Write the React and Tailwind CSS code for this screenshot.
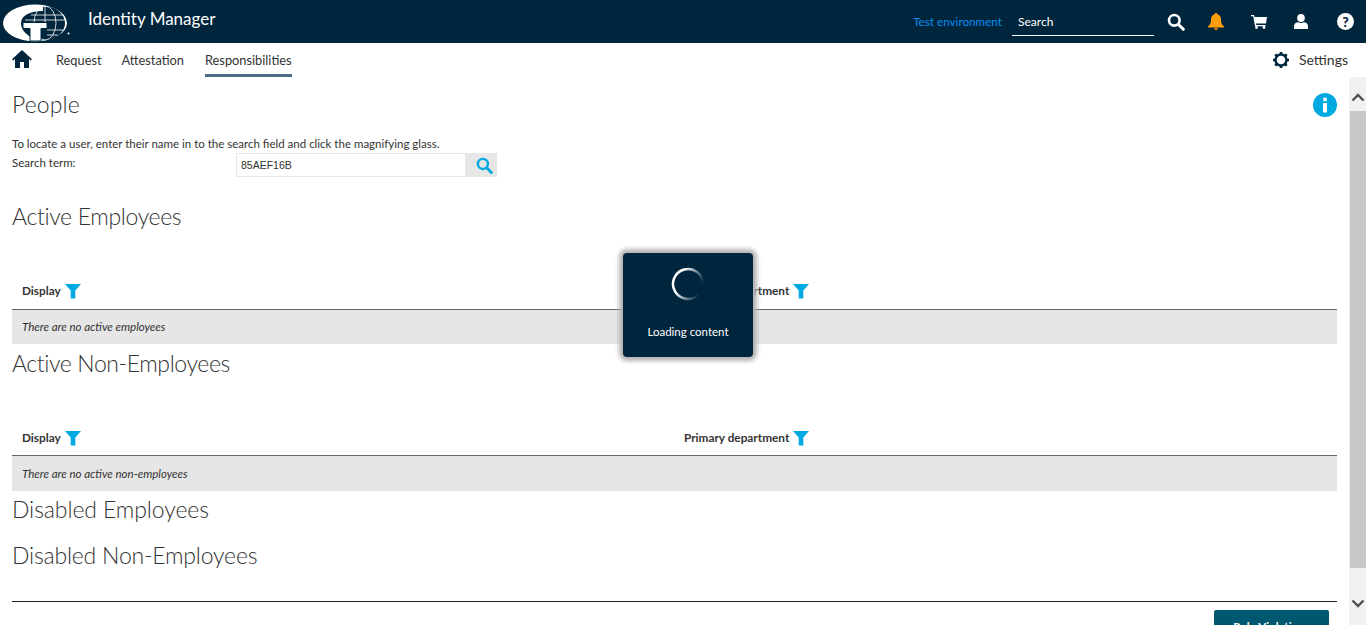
import React from "react";

const Funnel = () => (
  <svg width="16" height="16" viewBox="0 0 16 16" className="ml-[4px] shrink-0">
    <path d="M0 1h16L10.300 7.500V15.500H5.700V7.500Z" fill="#00a9e0" />
  </svg>
);

const Logo = () => (
  <svg width="70" height="43" viewBox="0 0 70 43" className="shrink-0">
    <ellipse cx="34" cy="23" rx="32" ry="18.500" fill="#fff" />
    <path d="M42 11C30 11 20 15 20 23c0 6 4 10 8 13 4 3 10 4 16 4 11 0 20-8 20-17 0-9-9-16.500-20-16.500h-2Z" fill="#00263e" />
    <g fill="none" stroke="#fff" strokeWidth="0.800">
      <ellipse cx="44" cy="23" rx="11" ry="17" />
      <path d="M44 6v17M30 15h32M24 20h40M46 30h16M46 35h11" />
    </g>
    <path d="M22 22.500h24v6H40V41H29V28.500h-7Z" fill="#fff" stroke="#00263e" strokeWidth="1" />
    <circle cx="67.500" cy="33.500" r="1" fill="#fff" />
  </svg>
);

const Heading = ({ className = "", children }) => (
  <h2 className={`text-[23px] leading-[30px] font-light text-[#333333] ${className}`}>{children}</h2>
);

const EmptyTable = ({ message, rowClass, headClass }) => (
  <div>
    <div className={`grid grid-cols-[662px_1fr] items-center border-b border-[#666666] pl-[10px] pb-[1px] ${headClass}`}>
      <div className="flex items-center text-[11.800px] font-bold text-[#333333]">Display<Funnel /></div>
      <div className="flex items-center text-[11.800px] font-bold text-[#333333]">Primary department<Funnel /></div>
    </div>
    <div className={`bg-[#e6e6e6] px-[10px] flex items-center text-[11.500px] italic text-[#333333] ${rowClass}`}>{message}</div>
  </div>
);

export default function App() {
  return (
    <div className="relative h-[625px] w-[1366px] overflow-hidden bg-white flex flex-col font-['Lato','Noto_Sans',sans-serif] text-[#333333]">
      <header className="h-[43px] shrink-0 bg-[#00263e] flex items-center text-white">
        <div className="ml-[1px]"><Logo /></div>
        <div className="ml-[17px] mb-[5px] text-[17px]">Identity Manager</div>
        <div className="ml-auto flex items-center">
          <span className="text-[11.700px] text-[#0a8cf0]">Test environment</span>
          <div className="ml-[10px] w-[142px] h-[29px] border-b border-white px-[6px] pt-[2px] flex items-center text-[12px]">Search</div>
          <svg width="18" height="18" viewBox="0 0 18 18" className="ml-[13px]">
            <circle cx="7.300" cy="7.300" r="5.300" fill="none" stroke="#fff" strokeWidth="2.600" />
            <path d="M11.300 11.300 16.300 16.300" stroke="#fff" strokeWidth="3" strokeLinecap="round" />
          </svg>
          <svg width="16" height="17" viewBox="0 0 16 17" className="ml-[23px]">
            <path d="M8 0c1 0 1.300.7 1.300 1.300C12 2 13 4 13 7c0 3.500 1.300 5 3 6.500V14.500H0V13.500C1.700 12 3 10.500 3 7c0-3 1-5 3.700-5.700C6.700.7 7 0 8 0Z" fill="#ff9e0d" />
            <path d="M6 15.300h4a2 1.700 0 0 1-4 0Z" fill="#ff9e0d" />
          </svg>
          <svg width="16" height="15" viewBox="0 0 16 15" className="ml-[27px]">
            <path d="M0 1h3l.6 2H16l-1 6.500H5L5.300 11H14.500v1.300H4L2.200 2.300H0Z" fill="#fff" />
            <circle cx="5.500" cy="13.500" r="1.400" fill="#fff" />
            <circle cx="13" cy="13.500" r="1.400" fill="#fff" />
          </svg>
          <svg width="14" height="15" viewBox="0 0 14 15" className="ml-[27px]">
            <ellipse cx="7" cy="4" rx="3.800" ry="4" fill="#fff" />
            <path d="M0 15v-3c0-2.500 2-3.500 4-3.800 1.800 1 4.200 1 6 0 2 .3 4 1.300 4 3.800v3Z" fill="#fff" />
          </svg>
          <div className="ml-[29px] mr-[12px] h-[17px] w-[17px] rounded-full bg-white flex items-center justify-center text-[14px] font-black text-[#00263e] leading-none">?</div>
        </div>
      </header>

      <nav className="h-[34px] shrink-0 flex items-center text-[12.800px] text-[#333333]">
        <svg width="20" height="18" viewBox="0 0 20 18" className="ml-[12px] mb-[2px]">
          <path d="M10 0 20 9.300 18.700 10.500 17 9V18H12V12H8V18H3V9L1.300 10.500 0 9.300Z" fill="#00263e" />
        </svg>
        <span className="ml-[24px] mt-[2px]">Request</span>
        <span className="ml-[20px] mt-[2px]">Attestation</span>
        <div className="ml-[21px] relative h-[34px] flex items-center border-b-[3px] border-[#4a6b8a] pt-[5px]">Responsibilities</div>
        <div className="ml-auto mr-[18px] flex items-center text-[14px]">
          <svg width="16" height="16" viewBox="0 0 16 16" className="mr-[10px]">
            <circle cx="8" cy="8" r="5.500" fill="none" stroke="#00263e" strokeWidth="2.400" />
            <g stroke="#00263e" strokeWidth="2.600">
              <path d="M8 0v2.500M8 13.500V16M0 8h2.500M13.500 8H16M2.300 2.300 4 4M12 12l1.700 1.700M13.700 2.300 12 4M4 12l-1.700 1.700" />
            </g>
          </svg>
          <span className="mb-[2px]">Settings</span>
        </div>
      </nav>

      <div className="flex-1 min-h-0 flex">
        <main className="flex-1 min-w-0 pl-[12px] pr-[12px] overflow-hidden">
          <div className="flex items-start justify-between mt-[13px]">
            <Heading className="-mt-[1px] tracking-[0.1px]">People</Heading>
            <svg width="24" height="24" viewBox="0 0 24 24" className="mt-[3px]">
              <circle cx="12" cy="12" r="12" fill="#00a9e0" />
              <circle cx="12" cy="6.500" r="2" fill="#fff" />
              <rect x="10" y="10" width="4" height="9.500" fill="#fff" />
            </svg>
          </div>
          <p className="mt-[17px] text-[11.500px] leading-[16px]">To locate a user, enter their name in to the search field and click the magnifying glass.</p>
          <div className="flex items-start text-[11.500px] mt-[1px]">
            <span className="w-[224px] leading-[16px] mt-[2px]">Search term:</span>
            <div className="w-[230px] h-[24px] border border-[#e6e6e6] pl-[4px] flex items-center text-[10.500px] font-['Liberation_Sans',sans-serif] pt-[2px]">85AEF16B</div>
            <div className="w-[31px] h-[24px] bg-[#e6e6e6] flex items-center justify-center pl-[5px]">
              <svg width="17" height="17" viewBox="0 0 18 18">
                <circle cx="7.300" cy="7.300" r="5.300" fill="none" stroke="#00a9e0" strokeWidth="2.600" />
                <path d="M11.300 11.300 16.300 16.300" stroke="#00a9e0" strokeWidth="3" strokeLinecap="round" />
              </svg>
            </div>
          </div>
          <Heading className="mt-[24px] tracking-[-0.35px]">Active Employees</Heading>
          <div className="mt-[43px]">
            <EmptyTable message="There are no active employees" headClass="h-[36px]" rowClass="h-[34px]" />
          </div>
          <Heading className="mt-[4px] tracking-[-0.4px]">Active Non-Employees</Heading>
          <div className="mt-[43px]">
            <EmptyTable message="There are no active non-employees" headClass="h-[35px]" rowClass="h-[35px]" />
          </div>
          <Heading className="mt-[3px] tracking-[-0.1px]">Disabled Employees</Heading>
          <Heading className="mt-[16px] tracking-[-0.2px]">Disabled Non-Employees</Heading>
          <div className="mt-[31px] border-t border-[#222222] flex justify-end pt-[8px] pr-[8px]">
            <button className="w-[115px] h-[34px] rounded-[2px] bg-[#005870] text-white text-[11.500px] font-bold pt-[2px] flex justify-center items-start leading-[30px]">Rule Violations</button>
          </div>
        </main>
        <aside className="w-[17px] shrink-0 bg-[#f1f1f1] flex flex-col items-center">
          <div className="h-[34px] w-full flex items-end justify-center pb-[9px]">
            <svg width="14" height="9" viewBox="0 0 14 9"><path d="M1.500 7.500 7 2l5.500 5.500" fill="none" stroke="#505050" strokeWidth="2.400" /></svg>
          </div>
          <div className="h-[457px] w-full bg-[#c8c8c8] ml-[1px]" />
          <div className="flex-1 w-full flex items-start justify-center pt-[31px]">
            <svg width="14" height="9" viewBox="0 0 14 9"><path d="M1.500 1.500 7 7l5.500-5.500" fill="none" stroke="#505050" strokeWidth="2.400" /></svg>
          </div>
        </aside>
      </div>

      <div className="absolute left-[623px] top-[253px] w-[130px] h-[104px] rounded-[4px] bg-[#00263e] shadow-[0_0_4px_4px_#b4b4b4] flex flex-col items-center text-white">
        <svg width="34" height="34" viewBox="0 0 34 34" className="mt-[14px]">
          <defs>
            <linearGradient id="spin" gradientUnits="userSpaceOnUse" x1="6" y1="22" x2="27" y2="30">
              <stop offset="0" stopColor="#fff" />
              <stop offset="1" stopColor="#00263e" />
            </linearGradient>
          </defs>
          <path d="M32 17A15 15 0 1 0 27.600 27.600" fill="none" stroke="url(#spin)" strokeWidth="2.500" />
        </svg>
        <div className="mt-[23px] text-[11.500px] leading-[16px]">Loading content</div>
      </div>
    </div>
  );
}
